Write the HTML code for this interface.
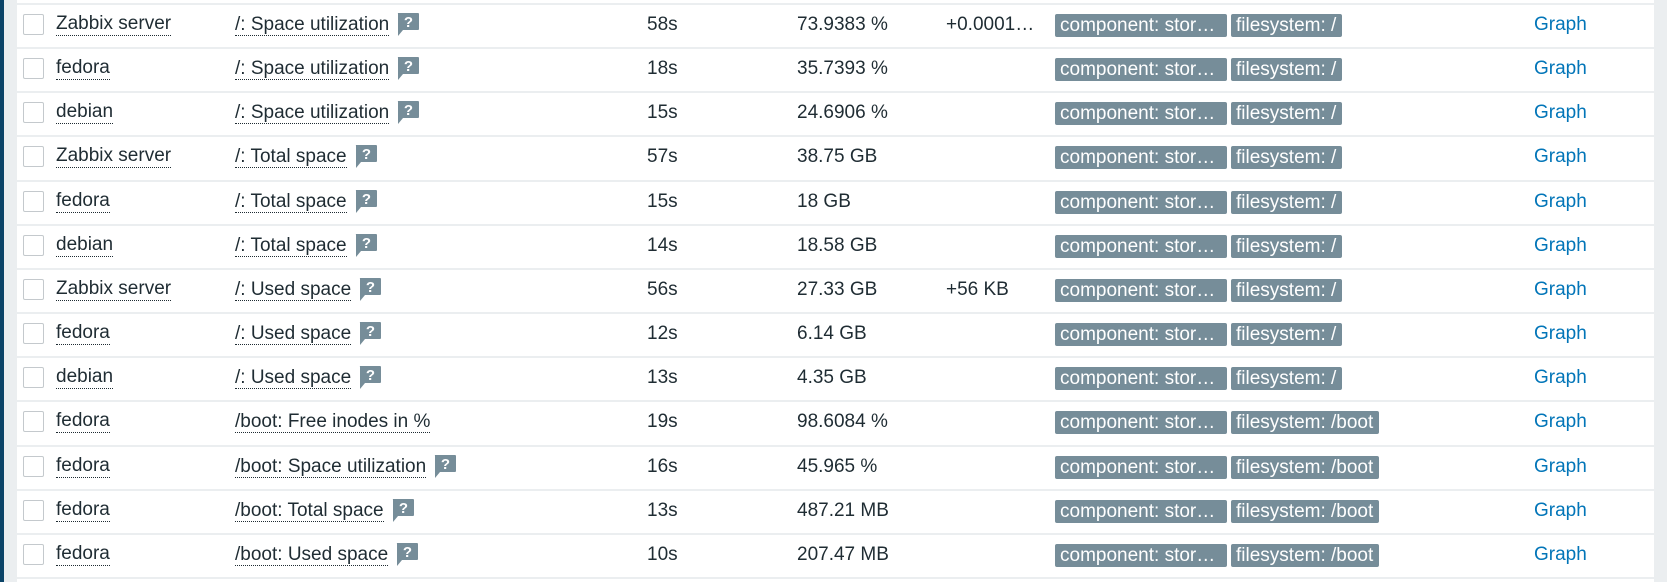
<!DOCTYPE html>
<html><head><meta charset="utf-8"><style>
*{margin:0;padding:0;box-sizing:border-box}
body{width:1667px;height:582px;background:#fff;font-family:"Liberation Sans",Arial,sans-serif;font-size:19px;color:#1f2c33;position:relative;overflow:hidden}
.ls{position:absolute;left:0;top:0;width:4px;height:582px;background:#0b4468}
.lg{position:absolute;left:4px;top:0;width:13px;height:582px;background:#ebeef0}
.rg{position:absolute;left:1654px;top:0;width:13px;height:582px;background:#ebeef0}
.row{position:absolute;left:17px;width:1637px;height:44.15px;border-top:2px solid #ebeef0}
.row>*{position:absolute;top:8px;line-height:24px;white-space:nowrap}
.cb{left:6px!important;top:9px!important;width:21px;height:21px;border:1px solid #c4c9cd;border-radius:2px;background:#fff}
.u{border-bottom:1px dotted #1f2c33;line-height:22px!important}
.tag{background:#768d99;color:#fff;border-radius:2px;height:23px;top:9px!important;line-height:23px!important;padding-left:5px;overflow:hidden}
.hl{display:inline-block;vertical-align:top;margin-left:8px;margin-top:0px;width:22px;height:23px;position:relative}
.g{color:#0275b8}
.last{position:absolute;left:17px;top:577px;width:1637px;border-top:2px solid #ebeef0}
</style></head><body>
<div class="ls"></div><div class="lg"></div><div class="rg"></div>
<svg width="0" height="0" style="position:absolute"><defs><symbol id="q" viewBox="0 0 22 23"><path d="M1 0H21a1 1 0 0 1 1 1V16a1 1 0 0 1-1 1H6L1 23V1a1 1 0 0 1 0-1Z" fill="#768d99"/><text x="11.5" y="14" font-family="Liberation Sans,Arial,sans-serif" font-weight="bold" font-size="15" fill="#fff" text-anchor="middle">?</text></symbol></defs></svg>
<div class="row" style="top:3px"><div class="cb"></div><span class="u" style="left:39px">Zabbix server</span><span style="left:218px"><span class="u">/: Space utilization</span><svg class="hl"><use href="#q"/></svg></span><span style="left:630px">58s</span><span style="left:780px">73.9383 %</span><span style="left:929px">+0.0001…</span><span class="tag" style="left:1038px;width:172px">component: stor…</span><span class="tag" style="left:1214px;width:111px">filesystem: /</span><span class="g" style="left:1517px">Graph</span></div>
<div class="row" style="top:47.15px"><div class="cb"></div><span class="u" style="left:39px">fedora</span><span style="left:218px"><span class="u">/: Space utilization</span><svg class="hl"><use href="#q"/></svg></span><span style="left:630px">18s</span><span style="left:780px">35.7393 %</span><span class="tag" style="left:1038px;width:172px">component: stor…</span><span class="tag" style="left:1214px;width:111px">filesystem: /</span><span class="g" style="left:1517px">Graph</span></div>
<div class="row" style="top:91.3px"><div class="cb"></div><span class="u" style="left:39px">debian</span><span style="left:218px"><span class="u">/: Space utilization</span><svg class="hl"><use href="#q"/></svg></span><span style="left:630px">15s</span><span style="left:780px">24.6906 %</span><span class="tag" style="left:1038px;width:172px">component: stor…</span><span class="tag" style="left:1214px;width:111px">filesystem: /</span><span class="g" style="left:1517px">Graph</span></div>
<div class="row" style="top:135.45px"><div class="cb"></div><span class="u" style="left:39px">Zabbix server</span><span style="left:218px"><span class="u">/: Total space</span><svg class="hl"><use href="#q"/></svg></span><span style="left:630px">57s</span><span style="left:780px">38.75 GB</span><span class="tag" style="left:1038px;width:172px">component: stor…</span><span class="tag" style="left:1214px;width:111px">filesystem: /</span><span class="g" style="left:1517px">Graph</span></div>
<div class="row" style="top:179.6px"><div class="cb"></div><span class="u" style="left:39px">fedora</span><span style="left:218px"><span class="u">/: Total space</span><svg class="hl"><use href="#q"/></svg></span><span style="left:630px">15s</span><span style="left:780px">18 GB</span><span class="tag" style="left:1038px;width:172px">component: stor…</span><span class="tag" style="left:1214px;width:111px">filesystem: /</span><span class="g" style="left:1517px">Graph</span></div>
<div class="row" style="top:223.75px"><div class="cb"></div><span class="u" style="left:39px">debian</span><span style="left:218px"><span class="u">/: Total space</span><svg class="hl"><use href="#q"/></svg></span><span style="left:630px">14s</span><span style="left:780px">18.58 GB</span><span class="tag" style="left:1038px;width:172px">component: stor…</span><span class="tag" style="left:1214px;width:111px">filesystem: /</span><span class="g" style="left:1517px">Graph</span></div>
<div class="row" style="top:267.9px"><div class="cb"></div><span class="u" style="left:39px">Zabbix server</span><span style="left:218px"><span class="u">/: Used space</span><svg class="hl"><use href="#q"/></svg></span><span style="left:630px">56s</span><span style="left:780px">27.33 GB</span><span style="left:929px">+56 KB</span><span class="tag" style="left:1038px;width:172px">component: stor…</span><span class="tag" style="left:1214px;width:111px">filesystem: /</span><span class="g" style="left:1517px">Graph</span></div>
<div class="row" style="top:312.05px"><div class="cb"></div><span class="u" style="left:39px">fedora</span><span style="left:218px"><span class="u">/: Used space</span><svg class="hl"><use href="#q"/></svg></span><span style="left:630px">12s</span><span style="left:780px">6.14 GB</span><span class="tag" style="left:1038px;width:172px">component: stor…</span><span class="tag" style="left:1214px;width:111px">filesystem: /</span><span class="g" style="left:1517px">Graph</span></div>
<div class="row" style="top:356.2px"><div class="cb"></div><span class="u" style="left:39px">debian</span><span style="left:218px"><span class="u">/: Used space</span><svg class="hl"><use href="#q"/></svg></span><span style="left:630px">13s</span><span style="left:780px">4.35 GB</span><span class="tag" style="left:1038px;width:172px">component: stor…</span><span class="tag" style="left:1214px;width:111px">filesystem: /</span><span class="g" style="left:1517px">Graph</span></div>
<div class="row" style="top:400.35px"><div class="cb"></div><span class="u" style="left:39px">fedora</span><span style="left:218px"><span class="u">/boot: Free inodes in %</span></span><span style="left:630px">19s</span><span style="left:780px">98.6084 %</span><span class="tag" style="left:1038px;width:172px">component: stor…</span><span class="tag" style="left:1214px;width:148px">filesystem: /boot</span><span class="g" style="left:1517px">Graph</span></div>
<div class="row" style="top:444.5px"><div class="cb"></div><span class="u" style="left:39px">fedora</span><span style="left:218px"><span class="u">/boot: Space utilization</span><svg class="hl"><use href="#q"/></svg></span><span style="left:630px">16s</span><span style="left:780px">45.965 %</span><span class="tag" style="left:1038px;width:172px">component: stor…</span><span class="tag" style="left:1214px;width:148px">filesystem: /boot</span><span class="g" style="left:1517px">Graph</span></div>
<div class="row" style="top:488.65px"><div class="cb"></div><span class="u" style="left:39px">fedora</span><span style="left:218px"><span class="u">/boot: Total space</span><svg class="hl"><use href="#q"/></svg></span><span style="left:630px">13s</span><span style="left:780px">487.21 MB</span><span class="tag" style="left:1038px;width:172px">component: stor…</span><span class="tag" style="left:1214px;width:148px">filesystem: /boot</span><span class="g" style="left:1517px">Graph</span></div>
<div class="row" style="top:532.8px"><div class="cb"></div><span class="u" style="left:39px">fedora</span><span style="left:218px"><span class="u">/boot: Used space</span><svg class="hl"><use href="#q"/></svg></span><span style="left:630px">10s</span><span style="left:780px">207.47 MB</span><span class="tag" style="left:1038px;width:172px">component: stor…</span><span class="tag" style="left:1214px;width:148px">filesystem: /boot</span><span class="g" style="left:1517px">Graph</span></div>
<div class="last"></div>
</body></html>
